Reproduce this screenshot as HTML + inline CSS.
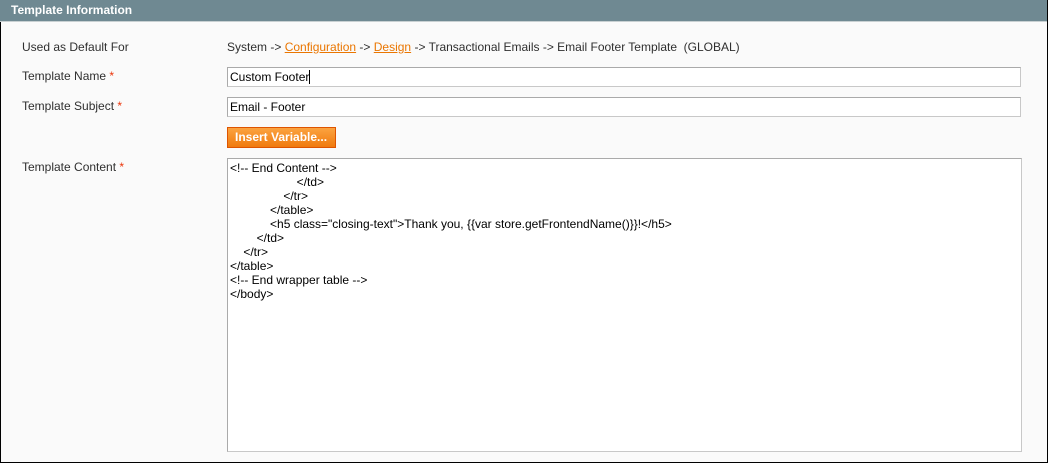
<!DOCTYPE html>
<html><head><style>
body{margin:0;width:1048px;height:463px;overflow:hidden;font-family:"Liberation Sans",Arial,sans-serif;font-size:12px;color:#2f2f2f}
.wrap{position:absolute;left:0;top:0;width:1046px;height:461px;border:1px solid #000;background:#fafafa}
.hd{position:absolute;left:-1px;top:-1px;width:1047px;height:22px;background:#6f8992;border-bottom:1px solid #c8d0d2;color:#fff;font-weight:bold;font-size:12px;line-height:21px;padding-left:11px;box-sizing:border-box}
.l{position:absolute;left:21px}
.r{color:#eb340a}
.v{position:absolute;left:226px}
a{color:#ea7601;text-decoration:underline}
.in{position:absolute;left:226px;width:794px;height:20px;box-sizing:border-box;border:1px solid;border-color:#aaa #c8c8c8 #c8c8c8 #aaa;background:#fff;padding:2px 2px;line-height:14px;color:#000}
.cur{display:inline-block;width:1px;height:14px;background:#000;vertical-align:-3px}
.btn{position:absolute;left:226px;top:126px;width:109px;height:21px;box-sizing:border-box;background:linear-gradient(#fba340,#f07a0e);border:1px solid #de5400;color:#fff;font-weight:bold;line-height:19px;padding-left:7px}
.ta{position:absolute;left:226px;top:157px;width:795px;height:294px;box-sizing:border-box;border:1px solid;border-color:#aaa #c8c8c8 #c8c8c8 #aaa;background:#fff;padding:2px 2px;white-space:pre;line-height:14px;color:#000}
</style></head><body><div class="wrap">
<div class="hd">Template Information</div>
<div class="l" style="top:39px">Used as Default For</div>
<div class="v" style="top:39px">System -&gt; <a>Configuration</a> -&gt; <a>Design</a> -&gt; Transactional Emails -&gt; Email Footer Template&nbsp; (GLOBAL)</div>
<div class="l" style="top:68px">Template Name <span class="r">*</span></div>
<div class="in" style="top:66px">Custom Footer<span class="cur"></span></div>
<div class="l" style="top:98px">Template Subject <span class="r">*</span></div>
<div class="in" style="top:96px">Email - Footer</div>
<div class="btn">Insert Variable...</div>
<div class="l" style="top:159px">Template Content <span class="r">*</span></div>
<div class="ta">&lt;!-- End Content --&gt;
                    &lt;/td&gt;
                &lt;/tr&gt;
            &lt;/table&gt;
            &lt;h5 class="closing-text"&gt;Thank you, {{var store.getFrontendName()}}!&lt;/h5&gt;
        &lt;/td&gt;
    &lt;/tr&gt;
&lt;/table&gt;
&lt;!-- End wrapper table --&gt;
&lt;/body&gt;</div>
</div></body></html>
